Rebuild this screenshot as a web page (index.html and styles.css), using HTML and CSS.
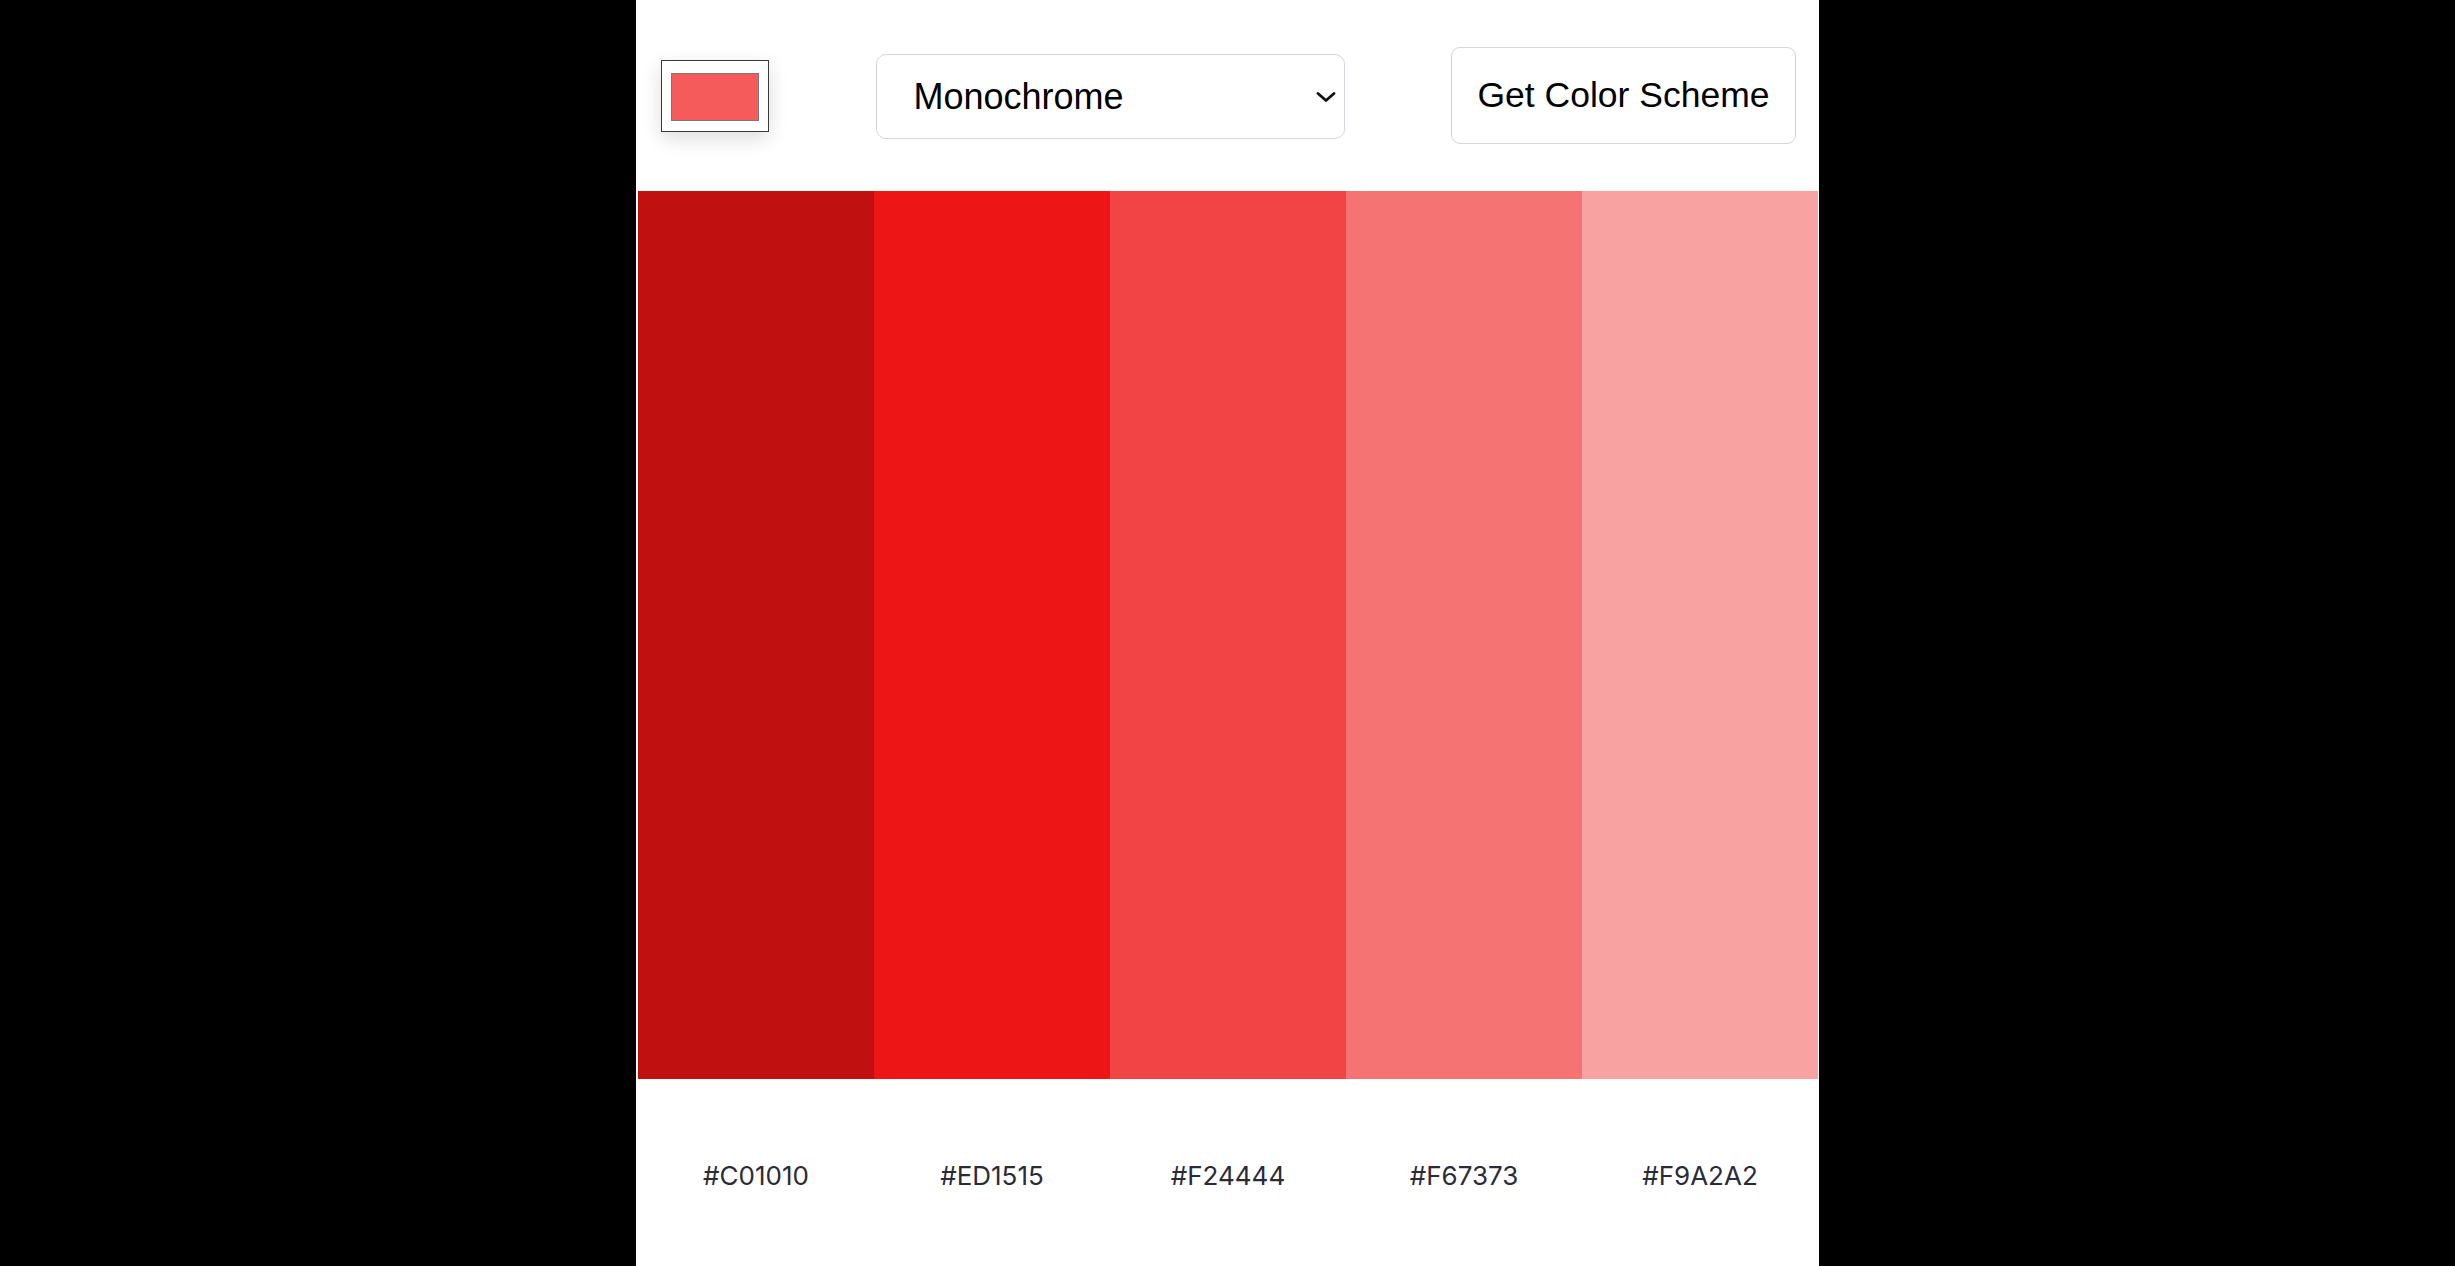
FILE: index.html
```html
<!DOCTYPE html>
<html lang="en">
<head>
<meta charset="utf-8">
<title>Color Scheme</title>
<link rel="stylesheet" href="styles.css">
</head>
<body>
<div class="app">
  <header class="controls">
    <div class="color-input"><div class="swatch"></div></div>
    <div class="select-wrap">
      <select class="scheme-select">
        <option>Monochrome</option>
        <option>Monochrome Dark</option>
        <option>Monochrome Light</option>
        <option>Analogic</option>
        <option>Complement</option>
      </select>
      <svg class="chevron" viewBox="0 0 20 10" width="20" height="10"><path d="M2 1.5 L10 8.5 L18 1.5" fill="none" stroke="#111" stroke-width="2.8" stroke-linecap="round" stroke-linejoin="round"/></svg>
    </div>
    <button class="get-btn">Get Color Scheme</button>
  </header>
  <main class="palette">
    <div class="column"><div class="color" style="background:#C01010"></div><div class="hex">#C01010</div></div>
    <div class="column"><div class="color" style="background:#ED1515"></div><div class="hex">#ED1515</div></div>
    <div class="column"><div class="color" style="background:#F24444"></div><div class="hex">#F24444</div></div>
    <div class="column"><div class="color" style="background:#F67373"></div><div class="hex">#F67373</div></div>
    <div class="column"><div class="color" style="background:#F9A2A2"></div><div class="hex">#F9A2A2</div></div>
  </main>
</div>
</body>
</html>
```
FILE: styles.css
```css
* { box-sizing: border-box; }
html, body { margin: 0; padding: 0; height: 100%; }
body {
  background: #000;
  font-family: "Liberation Sans", Arial, sans-serif;
}
.app {
  width: 1183px;
  height: 100vh;
  margin: 0 auto;
  background: #fff;
  display: flex;
  flex-direction: column;
}
.controls {
  height: 191px;
  flex: none;
  display: flex;
  align-items: center;
  justify-content: space-between;
  padding: 0 23px 0 25px;
}
.color-input {
  width: 108px;
  height: 72px;
  border: 1.3px solid #3a3a3a;
  background: #fff;
  padding: 12px 9px 10px 9px;
  box-shadow: 0 6px 18px rgba(0, 0, 0, 0.14);
  margin-top: 1px;
}
.swatch {
  width: 100%;
  height: 100%;
  background: #F65B5B;
  border: 1px solid #7a7a7a;
}
.select-wrap {
  position: relative;
  width: 469px;
  height: 85px;
  margin-top: 1px;
}
.scheme-select {
  appearance: none;
  -webkit-appearance: none;
  width: 100%;
  height: 100%;
  border: 1.3px solid #d4d6db;
  border-radius: 10px;
  background: #fff;
  color: #000;
  font-family: "Liberation Sans", Arial, sans-serif;
  font-size: 36px;
  padding: 0 40px 0 37px;
  outline: none;
}
.chevron {
  position: absolute;
  right: 9px;
  top: 38px;
  width: 20px;
  height: 10px;
  pointer-events: none;
}
.get-btn {
  width: 345px;
  height: 97px;
  border: 1.3px solid #d4d6db;
  border-radius: 9px;
  background: #fff;
  color: #000;
  font-family: "Liberation Sans", Arial, sans-serif;
  font-size: 35.5px;
  padding: 0;
  margin-top: -1px;
}
.palette {
  flex: 1;
  display: grid;
  grid-template-columns: repeat(5, 1fr);
  margin: 0 1px 0 2px;
}
.column {
  display: flex;
  flex-direction: column;
}
.color {
  height: 888px;
  flex: none;
}
.hex {
  flex: 1;
  display: flex;
  align-items: center;
  justify-content: center;
  font-family: Inter, "Liberation Sans", sans-serif;
  font-size: 26px;
  color: #2b2b38;
  padding-top: 6px;
}
```
